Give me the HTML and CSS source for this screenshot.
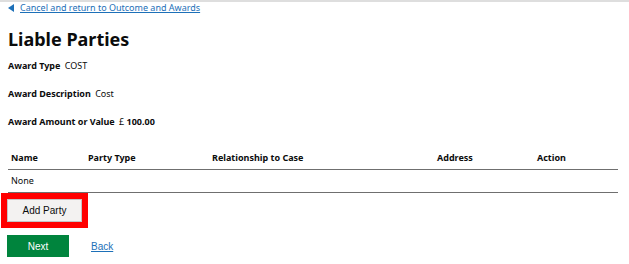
FILE: index.html
```html
<!DOCTYPE html>
<html lang="en">
<head>
    <meta charset="UTF-8">
    <meta name="viewport" content="width=device-width, initial-scale=1.0">
    <title>Liable Parties</title>
    <link rel="stylesheet" href="styles.css">
</head>
<body>
    <div class="top-bar"></div>
    <div class="page">
        <a class="back-link" href="#">Cancel and return to Outcome and Awards</a>

        <h1>Liable Parties</h1>

        <div class="summary">
            <div class="summary-row"><span class="label">Award Type</span> <span>COST</span></div>
            <div class="summary-row"><span class="label">Award Description</span> <span>Cost</span></div>
            <div class="summary-row"><span class="label">Award Amount or Value</span> <span>£ <b>100.00</b></span></div>
        </div>

        <table class="parties">
            <thead>
                <tr>
                    <th class="col-name">Name</th>
                    <th class="col-type">Party Type</th>
                    <th class="col-rel">Relationship to Case</th>
                    <th class="col-address">Address</th>
                    <th class="col-action">Action</th>
                </tr>
            </thead>
            <tbody>
                <tr>
                    <td colspan="5">None</td>
                </tr>
            </tbody>
        </table>

        <div class="add-row">
            <button class="btn-secondary highlight">Add Party</button>
        </div>

        <div class="actions">
            <button class="btn-primary">Next</button>
            <a class="link" href="#">Back</a>
        </div>
    </div>
</body>
</html>
```

FILE: styles.css
```css
body {
    margin: 0;
    font-family: "Noto Sans", sans-serif;
    color: #0b0c0c;
    background-color: #fff;
}

.top-bar {
    height: 2px;
    background-color: #dedede;
}

.page {
    padding: 0 11px 0 8px;
}

.back-link {
    display: block;
    position: relative;
    width: max-content;
    padding-left: 12px;
    font-size: 9px;
    line-height: 12px;
    color: #1d70b8;
}

.back-link::before {
    content: "";
    position: absolute;
    left: 0;
    top: 2px;
    border-style: solid;
    border-width: 4px 6px 4px 0;
    border-color: transparent #1d70b8 transparent transparent;
}

h1 {
    margin: 14px 0 0;
    font-size: 18px;
    line-height: 22px;
    font-weight: 700;
}

.summary {
    margin-top: 10px;
}

.summary-row {
    font-size: 9px;
    line-height: 12px;
    margin-bottom: 16px;
}

.summary-row:last-child {
    margin-bottom: 0;
}

.summary-row .label {
    font-weight: 700;
    margin-right: 2px;
}

.parties {
    width: 100%;
    border-collapse: collapse;
    margin-top: 18px;
    font-size: 9px;
}

.parties th {
    text-align: left;
    font-weight: 700;
    padding: 6px 3px 5px;
    line-height: 12px;
    border-bottom: 1px solid #6f6f6f;
}

.parties td {
    padding: 5px 3px;
    line-height: 12px;
    border-bottom: 1px solid #6f6f6f;
}

.col-name { width: 71px; }
.col-type { width: 118px; }
.col-rel { width: 219px; }
.col-address { width: 94px; }

.add-row {
    display: flex;
    padding-top: 6px;
}

.btn-secondary {
    margin-left: -1px;
    font-family: "Liberation Sans", Arial, sans-serif;
    font-size: 10px;
    width: 75px;
    height: 23px;
    padding: 0;
    border: 1px solid #c4c4c4;
    border-radius: 0;
    background-color: #f3f2f1;
    color: #0b0c0c;
    cursor: pointer;
}

.highlight {
    outline: 6px solid #ff0000;
    outline-offset: 0;
}

.actions {
    display: flex;
    align-items: center;
    gap: 22px;
    margin-top: 13px;
}

.btn-primary {
    margin-left: -1px;
    font-family: "Liberation Sans", Arial, sans-serif;
    font-size: 10px;
    width: 62px;
    height: 22px;
    padding: 0;
    border: none;
    border-radius: 0;
    background-color: #00843d;
    box-shadow: 0 2px 0 #002d18;
    color: #fff;
    cursor: pointer;
}

.link {
    font-family: "Liberation Sans", Arial, sans-serif;
    font-size: 10px;
    color: #1d70b8;
}
```
